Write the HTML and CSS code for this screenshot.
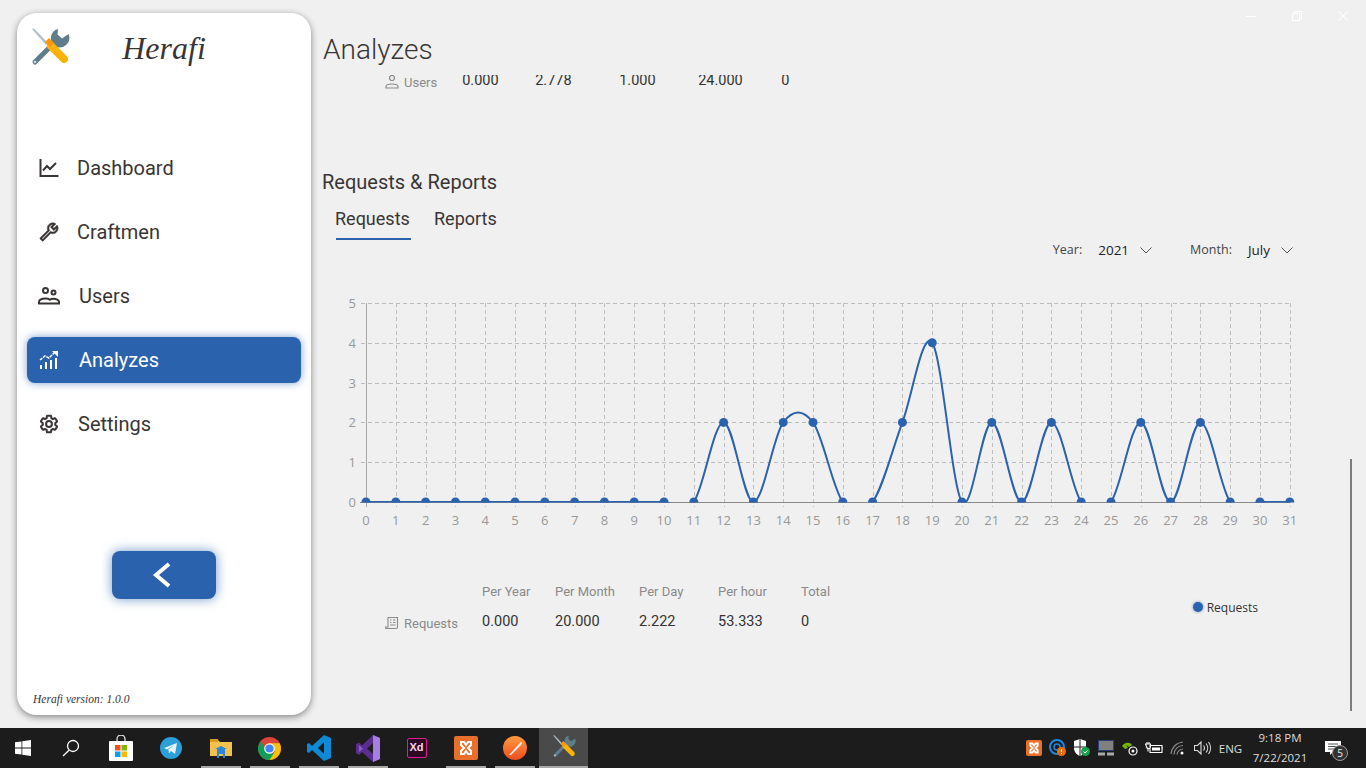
FILE: index.html
```html
<!DOCTYPE html>
<html lang="en">
<head>
    <meta charset="UTF-8">
    <title>Herafi</title>
    <link rel="stylesheet" href="styles.css">
</head>
<body>
    <svg class="defs" width="0" height="0">
        <symbol id="tools" viewBox="0 0 40 40">
            <path d="M2 1L4 0.500L18 15L16 17Z" fill="#b0bec5"/>
            <path d="M5 34L26 13" stroke="#607d8b" stroke-width="5" stroke-linecap="round"/>
            <path d="M28 1L27.500 6.500L32 10.500L38.500 6A9.500 9.500 0 0 1 25 18A9.500 9.500 0 0 1 28 1Z" fill="#607d8b"/>
            <path d="M21 18L34 31" stroke="#ffb300" stroke-width="8" stroke-linecap="round"/>
            <path d="M15 14L19 10L24 15L20 19Z" fill="#ff9800"/>
            <circle cx="5" cy="34" r="1.300" fill="#cfd8dc"/>
        </symbol>
    </svg>

    <div class="app">
        <aside class="sidebar">
            <div class="brand">
                <svg class="brand-logo" width="40" height="40"><use href="#tools"/></svg>
                <div class="brand-name">Herafi</div>
            </div>
            <nav class="nav">
                <div class="nav-item">
                    <svg class="nav-icon" width="20" height="20" viewBox="0 0 20 20" fill="none" stroke="currentColor" stroke-width="2">
                        <path d="M1.500 1v17h18M4 12.500l4-4.500 3 3 6-6"/>
                    </svg>
                    <span>Dashboard</span>
                </div>
                <div class="nav-item">
                    <svg class="nav-icon icon-flip" width="20" height="20" viewBox="0 0 24 24" fill="currentColor" stroke="currentColor" stroke-width=".6">
                        <path d="M22.61 18.99l-9.08-9.08c.93-2.34.45-5.1-1.44-7C9.79.61 6.21.4 3.66 2.26L7.5 6.11 6.08 7.52 2.25 3.69C.39 6.23.6 9.82 2.9 12.11c1.86 1.86 4.57 2.35 6.89 1.48l9.11 9.11c.39.39 1.02.39 1.41 0l2.3-2.3c.4-.38.4-1.01 0-1.41zm-3 1.6l-9.46-9.46c-.61.45-1.29.72-2 .82-1.36.2-2.79-.21-3.83-1.25C3.37 9.76 2.93 8.5 3 7.26l3.09 3.09 4.24-4.24-3.09-3.09c1.24-.07 2.49.37 3.44 1.31 1.08 1.08 1.49 2.57 1.24 3.96-.12.71-.42 1.37-.88 1.96l9.45 9.45-.88.88z"/>
                    </svg>
                    <span>Craftmen</span>
                </div>
                <div class="nav-item nav-item-wide">
                    <svg class="nav-icon icon-users" width="22" height="18" viewBox="0 0 22 18" fill="none" stroke="currentColor" stroke-width="2">
                        <circle cx="7.500" cy="3.500" r="2.500"/>
                        <circle cx="15.500" cy="5.500" r="2"/>
                        <path d="M1 16.500v-1.500c0-2.500 3.500-3.500 6.500-3.500 2 0 3.500.5 4.500 1.200 1-.6 2.300-.9 3.500-.9 2.500 0 5.500 1.200 5.500 3v1.700z"/>
                    </svg>
                    <span>Users</span>
                </div>
                <div class="nav-item nav-item-wide active">
                    <svg class="nav-icon" width="20" height="20" viewBox="0 0 20 20" fill="currentColor">
                        <rect x="1" y="15" width="2" height="4"/>
                        <rect x="6" y="12" width="2" height="7"/>
                        <rect x="11" y="10" width="2" height="9"/>
                        <rect x="16" y="8" width="2" height="11"/>
                        <path d="M1 10l5-4 4 2 6-6" fill="none" stroke="currentColor" stroke-width="1.500" stroke-dasharray="3 1"/>
                        <path d="M13 1h6v6z"/>
                    </svg>
                    <span>Analyzes</span>
                </div>
                <div class="nav-item nav-item-gear">
                    <svg class="nav-icon" width="20" height="20" viewBox="0 0 24 24" fill="none" stroke="currentColor" stroke-width="2.400">
                        <path d="M19.43 12.98c.04-.32.07-.64.07-.98s-.03-.66-.07-.98l2.11-1.65c.19-.15.24-.42.12-.64l-2-3.46c-.12-.22-.39-.3-.61-.22l-2.49 1c-.52-.4-1.08-.73-1.69-.98l-.38-2.65C14.46 2.18 14.25 2 14 2h-4c-.25 0-.46.18-.49.42l-.38 2.65c-.61.25-1.17.59-1.69.98l-2.49-1c-.23-.09-.49 0-.61.22l-2 3.46c-.13.22-.07.49.12.64l2.11 1.65c-.04.32-.07.65-.07.98s.03.66.07.98l-2.11 1.65c-.19.15-.24.42-.12.64l2 3.46c.12.22.39.3.61.22l2.49-1c.52.4 1.08.73 1.69.98l.38 2.65c.03.24.24.42.49.42h4c.25 0 .46-.18.49-.42l.38-2.65c.61-.25 1.17-.59 1.69-.98l2.49 1c.23.09.49 0 .61-.22l2-3.46c.12-.22.07-.49-.12-.64l-2.11-1.65z"/>
                        <circle cx="12" cy="12" r="3.500"/>
                    </svg>
                    <span>Settings</span>
                </div>
            </nav>
            <button class="collapse-btn">
                <svg width="20" height="26" viewBox="0 0 20 26" fill="none" stroke="#fff" stroke-width="4">
                    <path d="M17 2L4 13l13 11"/>
                </svg>
            </button>
            <div class="version">Herafi version: 1.0.0</div>
        </aside>

        <main class="main">
            <h1 class="page-title">Analyzes</h1>
            <div class="scroll">
                <div class="stat-grid stat-grid-users">
                    <div class="stat-label">
                        <svg width="14" height="14" viewBox="0 0 14 14" fill="none" stroke="#8a8a8a" stroke-width="1.200">
                            <circle cx="7" cy="3" r="2.500"/>
                            <path d="M1 13v-1.500c0-1.500 3-2.500 6-2.500s6 1 6 2.500V13z"/>
                        </svg>
                        Users
                    </div>
                    <div class="stat-value">0.000</div>
                    <div class="stat-value">2.778</div>
                    <div class="stat-value">1.000</div>
                    <div class="stat-value">24.000</div>
                    <div class="stat-value">0</div>
                </div>

                <h2 class="section-title">Requests &amp; Reports</h2>
                <div class="tabs">
                    <div class="tab active">Requests</div>
                    <div class="tab">Reports</div>
                </div>

                <div class="filters">
                    <div class="filter">
                        <span class="filter-label">Year:</span>
                        <span class="filter-value">2021</span>
                        <svg width="12" height="7" viewBox="0 0 12 7" fill="none" stroke="#555"><path d="M.5.5L6 6 11.500.5"/></svg>
                    </div>
                    <div class="filter">
                        <span class="filter-label">Month:</span>
                        <span class="filter-value">July</span>
                        <svg width="12" height="7" viewBox="0 0 12 7" fill="none" stroke="#555"><path d="M.5.5L6 6 11.500.5"/></svg>
                    </div>
                </div>

                <div id="chart" class="chart"></div>

                <div class="stats-row">
                    <div class="stat-grid">
                        <div></div>
                        <div class="stat-head">Per Year</div>
                        <div class="stat-head">Per Month</div>
                        <div class="stat-head">Per Day</div>
                        <div class="stat-head">Per hour</div>
                        <div class="stat-head">Total</div>
                        <div class="stat-label">
                            <svg width="14" height="14" viewBox="0 0 14 14" fill="none" stroke="#8a8a8a" stroke-width="1.100">
                                <path d="M3 11V1.500h9.500V11c0 1-.5 1.500-1.500 1.500H1.500C.8 12.500.5 12 .5 11z"/>
                                <path d="M5 4h1.500M8 4h2.500M5 6.500h1.500M8 6.500h2.500M5 9h5.500"/>
                            </svg>
                            Requests
                        </div>
                        <div class="stat-value">0.000</div>
                        <div class="stat-value">20.000</div>
                        <div class="stat-value">2.222</div>
                        <div class="stat-value">53.333</div>
                        <div class="stat-value">0</div>
                    </div>
                    <div class="legend">
                        <span class="legend-dot"></span>
                        Requests
                    </div>
                </div>
            </div>
            <div class="scrollbar"></div>
        </main>

        <div class="window-controls">
            <svg width="10" height="10" viewBox="0 0 10 10" stroke="#fff"><path d="M0 5.500h10"/></svg>
            <svg width="10" height="10" viewBox="0 0 10 10" fill="none" stroke="#fff"><path d="M.5 2.500h7v7h-7zM2.500 2.500v-2h7v7h-2"/></svg>
            <svg width="10" height="10" viewBox="0 0 10 10" stroke="#fff"><path d="M0 0l10 10M10 0L0 10"/></svg>
        </div>
    </div>

    <footer class="taskbar">
        <div class="task-item task-start">
            <svg width="16" height="16" viewBox="0 0 16 16" fill="#fff">
                <path d="M0 2.300l6.500-.9v6.200H0zM7.300 1.300L16 0v7.600H7.300zM0 8.400h6.500v6.200L0 13.700zM7.300 8.400H16V16l-8.700-1.300z"/>
            </svg>
        </div>
        <div class="task-item task-search">
            <svg width="18" height="18" viewBox="0 0 18 18" fill="none" stroke="#fff" stroke-width="1.300">
                <circle cx="11" cy="7" r="5.500"/>
                <path d="M7 11.200L1 17"/>
            </svg>
        </div>
        <div class="task-item task-search">
            <svg width="24" height="26" viewBox="0 0 24 26">
                <path d="M8 7V4a4 4 0 0 1 8 0v3" fill="none" stroke="#ddd" stroke-width="1.300"/>
                <rect y="6" width="24" height="20" rx="1" fill="#fff"/>
                <rect x="6" y="10" width="5.500" height="5.500" fill="#f25022"/>
                <rect x="12.500" y="10" width="5.500" height="5.500" fill="#7fba00"/>
                <rect x="6" y="16.500" width="5.500" height="5.500" fill="#00a4ef"/>
                <rect x="12.500" y="16.500" width="5.500" height="5.500" fill="#ffb900"/>
            </svg>
        </div>
        <div class="task-item task-search">
            <svg width="22" height="22" viewBox="0 0 22 22">
                <circle cx="11" cy="11" r="11" fill="#2a9fd8"/>
                <path d="M4 11l13-5-2 11-4-3-2 2.500-.7-4L15 7.500 7 12.500z" fill="#e8f4fa"/>
            </svg>
        </div>
        <div class="task-item running">
            <svg width="22" height="20" viewBox="0 0 22 20">
                <path d="M0 2h8l2 2h12v14H0z" fill="#f2c14e"/>
                <path d="M0 1h8v3H0z" fill="#d99a1e"/>
                <path d="M7 11h8v9h-2v-4H9v4H7z" fill="#2b88d8"/>
                <path d="M5 11l6-3 6 3z" fill="#2b88d8"/>
            </svg>
        </div>
        <div class="task-item running">
            <svg width="23" height="23" viewBox="0 0 24 24">
                <circle cx="12" cy="12" r="12" fill="#db4437"/>
                <path d="M12 24a12 12 0 0 1-10.400-6A12 12 0 0 1 3 4.500L7 12h5l5 8.500A12 12 0 0 1 12 24z" fill="#0f9d58"/>
                <path d="M12 6.500h10.600A12 12 0 0 1 12 24l5.500-9z" fill="#f4c20d"/>
                <circle cx="12" cy="12" r="5.500" fill="#fff"/>
                <circle cx="12" cy="12" r="4.300" fill="#4285f4"/>
            </svg>
        </div>
        <div class="task-item running">
            <svg width="24" height="26" viewBox="0 0 24 26">
                <path d="M17 0l7 3v20l-7 3L5 15l-3 3-2-1v-8l2-1 3 3zM17 7l-6 6 6 6z" fill="#0e8ad6"/>
            </svg>
        </div>
        <div class="task-item running">
            <svg width="24" height="27" viewBox="0 0 24 27">
                <path d="M17 0l7 3v21l-7 3-11-10-3 3-3-2V9l3-1.500 3 3z" fill="#5c2d91"/>
                <path d="M17 0l7 3v21l-7 3z" fill="#a77fe0"/>
                <path d="M3 10l4 3.500L3 17z" fill="#8a5bd1"/>
                <path d="M17 8l-6 5.500 6 5.500z" fill="#1e1e1e"/>
            </svg>
        </div>
        <div class="task-item">
            <div class="xd-icon">Xd</div>
        </div>
        <div class="task-item running">
            <div class="xampp-icon">
                <svg width="16" height="16" viewBox="0 0 16 16" fill="none" stroke="#fff" stroke-width="2">
                    <path d="M3 2h3l2 3 2-3h3v3l-3 3 3 3v3h-3l-2-3-2 3H3v-3l3-3-3-3z"/>
                </svg>
            </div>
        </div>
        <div class="task-item running">
            <svg width="24" height="24" viewBox="0 0 24 24">
                <defs>
                    <linearGradient id="paw" x1="0" y1="0" x2="0" y2="1">
                        <stop offset="0" stop-color="#ff9a3c"/>
                        <stop offset="1" stop-color="#f04d23"/>
                    </linearGradient>
                </defs>
                <circle cx="12" cy="12" r="12" fill="url(#paw)"/>
                <path d="M6 19L16 8l2-2 1 1-1 2L8 19z" fill="#fff" opacity=".9"/>
            </svg>
        </div>
        <div class="task-item running-active">
            <svg width="24" height="24"><use href="#tools"/></svg>
        </div>

        <div class="tray">
            <div class="tray-icon">
                <div class="xampp-icon xampp-small">
                    <svg width="12" height="12" viewBox="0 0 16 16" fill="none" stroke="#fff" stroke-width="2.400">
                        <path d="M3 2h3l2 3 2-3h3v3l-3 3 3 3v3h-3l-2-3-2 3H3v-3l3-3-3-3z"/>
                    </svg>
                </div>
            </div>
            <div class="tray-icon">
                <svg width="18" height="18" viewBox="0 0 18 18">
                    <circle cx="8" cy="8" r="7" fill="none" stroke="#1e88e5" stroke-width="2"/>
                    <circle cx="8" cy="8" r="3" fill="none" stroke="#1e88e5" stroke-width="1.500"/>
                    <circle cx="12.500" cy="12.500" r="4.500" fill="#ef6c00"/>
                    <path d="M12.500 10v3M12.500 14v1" stroke="#fff"/>
                </svg>
            </div>
            <div class="tray-icon">
                <svg width="18" height="18" viewBox="0 0 18 18">
                    <path d="M1 2l6-2 6 2v7c0 4-3 7-6 8-3-1-6-4-6-8z" fill="#fff"/>
                    <path d="M7 0v17M1 8h12" stroke="#1c1c1c"/>
                    <circle cx="12.500" cy="12.500" r="4.500" fill="#16a34a"/>
                    <path d="M10.500 12.500l1.500 1.500 2.500-2.500" fill="none" stroke="#fff"/>
                </svg>
            </div>
            <div class="tray-icon">
                <svg width="16" height="16" viewBox="0 0 16 16">
                    <rect x=".5" y=".5" width="15" height="10" fill="#808080" stroke="#2a3f7a"/>
                    <rect y="12.500" width="7" height="3" fill="#aaa"/>
                    <rect x="9" y="12.500" width="7" height="3" fill="#aaa"/>
                </svg>
            </div>
            <div class="tray-icon">
                <svg width="18" height="16" viewBox="0 0 18 16">
                    <path d="M1 6c3-4 8-4 10-1l-3 2-3-2 2 3-3 1z" fill="#76b900"/>
                    <circle cx="12" cy="11" r="4" fill="none" stroke="#fff" stroke-width="1.200"/>
                    <circle cx="12" cy="11" r="1.500" fill="#fff"/>
                </svg>
            </div>
            <div class="tray-icon">
                <svg width="18" height="12" viewBox="0 0 18 12" fill="none" stroke="#fff" stroke-width="1.100">
                    <path d="M5 3.500h12v7H5zM17 6h1M2 0v2M4 0v2M.5 2h5v2.500a2 2 0 0 1-4 0zM3 6.500v3"/>
                    <rect x="7" y="5.500" width="8" height="3" fill="#fff" stroke="none"/>
                </svg>
            </div>
            <div class="tray-icon">
                <svg width="16" height="14" viewBox="0 0 16 14" fill="none" stroke="#888" stroke-width="1.200">
                    <path d="M1 13A13 13 0 0 1 13 1M4 13.500A9 9 0 0 1 13 4.500M7 13.500A6 6 0 0 1 13 8"/>
                    <circle cx="12" cy="12" r="1.500" fill="#fff" stroke="none"/>
                </svg>
            </div>
            <div class="tray-icon">
                <svg width="17" height="14" viewBox="0 0 17 14" fill="none" stroke="#ddd" stroke-width="1.100">
                    <path d="M.5 4.500h3L7 1v12L3.500 9.500h-3zM9.500 4.500a4 4 0 0 1 0 5M12 2.500a7 7 0 0 1 0 9M14.500 1a10 10 0 0 1 0 12" />
                </svg>
            </div>
            <div class="tray-lang">ENG</div>
            <div class="tray-clock">
                <div>9:18 PM</div>
                <div>7/22/2021</div>
            </div>
            <div class="tray-notify">
                <svg width="16" height="15" viewBox="0 0 16 15">
                    <path d="M0 0h16v11H8l-3 3v-3H0z" fill="#fff"/>
                    <path d="M3 3h10M3 5.500h10M3 8h6" stroke="#555"/>
                </svg>
                <span class="notify-badge">5</span>
            </div>
        </div>
    </footer>

    <script src="chart.js"></script>
</body>
</html>
```

FILE: styles.css
```css
* {
    box-sizing: border-box;
}
html, body {
    margin: 0;
    padding: 0;
    height: 768px;
    overflow: hidden;
}
body {
    display: flex;
    flex-direction: column;
    background-color: #f0f0f0;
    font-family: Roboto, 'Noto Sans', sans-serif;
    color: #3a3535;
}
.defs {
    position: absolute;
}
.app {
    position: relative;
    display: flex;
    height: 728px;
}

/* sidebar */
.sidebar {
    display: flex;
    flex-direction: column;
    flex-shrink: 0;
    width: 294px;
    height: 702px;
    margin: 13px 0 13px 17px;
    background-color: #fff;
    border-radius: 20px;
    box-shadow: 0 2px 7px rgba(0,0,0,0.45);
}
.brand {
    display: grid;
    grid-template-columns: 1fr auto 1fr;
    align-items: center;
    height: 40px;
    margin-top: 15px;
    padding-left: 13px;
    padding-right: 13px;
}
.brand-name {
    font-family: 'Liberation Serif', serif;
    font-style: italic;
    font-size: 32px;
    line-height: 40px;
}
.nav {
    display: flex;
    flex-direction: column;
    gap: 18px;
    margin-top: 77px;
    padding: 0 10px;
}
.nav-item {
    display: flex;
    align-items: center;
    height: 46px;
    padding-left: 12px;
    border-radius: 8px;
    font-size: 20px;
}
.nav-item span {
    margin-left: 18px;
}
.nav-icon {
    flex-shrink: 0;
}
.icon-flip {
    transform: scaleX(-1);
}
.nav-item-wide span {
    margin-left: 20px;
}
.nav-item-gear span {
    margin-left: 19px;
}
.icon-users {
    margin-left: -1px;
}
.icon-users + span {
    margin-left: 19px;
}
.nav-item.active {
    background-color: #2b62ae;
    color: #fff;
    box-shadow: 0 0 8px rgba(43,98,174,0.6);
}
.collapse-btn {
    display: flex;
    align-items: center;
    justify-content: center;
    align-self: center;
    width: 104px;
    height: 48px;
    margin-top: 104px;
    padding: 0 4px 0 0;
    border: none;
    border-radius: 8px;
    background-color: #2b62ae;
    box-shadow: 0 0 12px rgba(43,98,174,0.65);
}
.version {
    margin-top: auto;
    padding: 0 0 8px 16px;
    font-family: 'Liberation Serif', serif;
    font-style: italic;
    font-size: 11.5px;
    line-height: 16px;
}

/* main */
.main {
    position: relative;
    display: flex;
    flex-direction: column;
    flex: 1;
    min-width: 0;
    height: 728px;
    margin-left: 12px;
}
.page-title {
    margin: 0;
    padding: 33px 0 9px;
    font-weight: 300;
    font-size: 28px;
    line-height: 33px;
}
.scroll {
    flex: 1;
    overflow: hidden;
}
.stat-grid {
    display: grid;
    grid-template-columns: auto 73px 84px 79px 83px auto;
    align-items: center;
    justify-content: start;
    margin-left: 62px;
    row-gap: 9px;
}
.stat-grid-users {
    margin-top: -6px;
}
.stat-grid-users .stat-label {
    padding-right: 25px;
}
.stat-label {
    display: flex;
    align-items: center;
    gap: 5px;
    padding-top: 2px;
    padding-right: 24px;
    font-size: 13px;
    color: #8a8a8a;
}
.stat-value {
    font-size: 14.5px;
    line-height: 24px;
    color: #333;
}
.stat-head {
    font-size: 13px;
    line-height: 18px;
    color: #8a8a8a;
}
.section-title {
    margin: 77px 0 0 -1px;
    font-weight: 400;
    font-size: 20px;
    line-height: 24px;
}
.tabs {
    display: flex;
    gap: 23px;
    margin: 13px 0 0 13px;
}
.tab {
    padding-bottom: 7px;
    border-bottom: 2px solid transparent;
    font-size: 18px;
    line-height: 24px;
}
.tab.active {
    width: 75px;
    text-indent: -1px;
    border-bottom-color: #2b62ae;
}
.filters {
    display: flex;
    justify-content: flex-end;
    gap: 38px;
    height: 20px;
    padding-right: 73px;
    font-family: 'Open Sans', sans-serif;
    font-size: 12.5px;
    line-height: 20px;
}
.filter {
    display: flex;
    align-items: center;
}
.filter-label {
    color: #444;
}
.filter-value {
    margin: 0 11px 0 16px;
    font-size: 13.5px;
    color: #222;
}
.chart {
    margin: 30px 0 0 17px;
    height: 245px;
}
.chart svg {
    display: block;
}
.stats-row {
    display: flex;
    align-items: center;
    justify-content: space-between;
    margin-top: 48px;
    padding-right: 108px;
}
.legend {
    display: flex;
    align-items: center;
    gap: 4px;
    padding-bottom: 3px;
    font-family: 'Open Sans', sans-serif;
    font-size: 12px;
    color: #333;
}
.legend-dot {
    width: 10px;
    height: 10px;
    border-radius: 50%;
    background-color: #2b62ae;
    box-shadow: 0 0 3px rgba(43,98,174,0.7);
}
.scrollbar {
    position: absolute;
    top: 459px;
    right: 14px;
    width: 2px;
    height: 252px;
    background-color: #7d7d7d;
}
.window-controls {
    position: absolute;
    top: 11px;
    right: 18px;
    display: flex;
    gap: 36px;
}

/* taskbar */
.taskbar {
    display: flex;
    align-items: stretch;
    height: 40px;
    background-color: #1c1c1c;
}
.task-item {
    position: relative;
    display: flex;
    align-items: center;
    justify-content: center;
    width: 49px;
}
.task-start {
    width: 46px;
}
.task-search {
    width: 50px;
}
.task-item.running::after {
    content: "";
    position: absolute;
    left: 5px;
    right: 4px;
    bottom: 0;
    height: 2px;
    background-color: #a8a8a8;
}
.task-item.running-active {
    background-color: #4a4a4a;
    border-bottom: 2px solid #a8a8a8;
}
.xd-icon {
    width: 20px;
    height: 20px;
    border: 1.5px solid #e01b9a;
    border-radius: 2px;
    background-color: #2d0a24;
    color: #f7d7ec;
    font-family: 'Liberation Sans', sans-serif;
    font-size: 11px;
    font-weight: 700;
    line-height: 17px;
    text-align: center;
}
.xampp-icon {
    display: flex;
    align-items: center;
    justify-content: center;
    width: 24px;
    height: 24px;
    border-radius: 2px;
    background-color: #e8702a;
}
.xampp-small {
    width: 16px;
    height: 16px;
}
.tray {
    display: flex;
    align-items: center;
    margin-left: auto;
    padding-right: 10px;
    font-family: 'Open Sans', sans-serif;
    color: #ddd;
}
.tray-icon {
    display: flex;
    align-items: center;
    justify-content: center;
    width: 24px;
}
.tray-lang {
    width: 36px;
    padding-right: 3px;
    font-size: 11.5px;
    text-align: center;
}
.tray-clock {
    width: 60px;
    font-size: 11.5px;
    line-height: 20px;
    text-align: center;
}
.tray-notify {
    position: relative;
    display: flex;
    align-items: center;
    justify-content: center;
    width: 46px;
    height: 40px;
}
.notify-badge {
    position: absolute;
    top: 17px;
    right: 8px;
    width: 16px;
    height: 16px;
    border: 1px solid #999;
    border-radius: 50%;
    background-color: #333;
    font-size: 10px;
    line-height: 14px;
    text-align: center;
    color: #eee;
}
```

FILE: chart.js
```js
// Requests per day of the month
const days = { 12: 2, 14: 2, 15: 2, 18: 2, 19: 4, 21: 2, 23: 2, 26: 2, 28: 2 };
const values = [];
for (let i = 0; i <= 31; i++) {
    values.push(days[i] || 0);
}

const X = i => 26 + i * 29.8;
const Y = v => 212 - v * 39.8;
const crisp = n => Math.round(n) + 0.5;

let out = '<svg width="970" height="245" viewBox="0 0 970 245">';
out += '<defs><clipPath id="plot"><rect x="18" y="0" width="960" height="212.5"/></clipPath></defs>';

// grid
for (let v = 1; v <= 5; v++) {
    const y = crisp(Y(v));
    out += `<path d="M21 ${y}H950" fill="none" stroke="#bdbdbd" stroke-dasharray="4 3"/>`;
}
for (let i = 1; i <= 31; i++) {
    const x = crisp(X(i));
    out += `<path d="M${x} 13V217" fill="none" stroke="#bdbdbd" stroke-dasharray="4 3"/>`;
}
out += '<path d="M26.5 13V217" stroke="#a8a8a8" fill="none"/>';
out += '<path d="M20 212.5H950" stroke="#8a8a8a" fill="none"/>';

// labels
const labelStyle = 'font-family="Open Sans, sans-serif" font-size="13" fill="#989898"';
for (let v = 0; v <= 5; v++) {
    out += `<text x="16" y="${Y(v) + 5}" text-anchor="end" ${labelStyle}>${v}</text>`;
}
for (let i = 0; i <= 31; i++) {
    out += `<text x="${X(i)}" y="235" text-anchor="middle" ${labelStyle}>${i}</text>`;
}

// curve, catmull-rom turned into beziers
let d = `M${X(0)} ${Y(values[0])}`;
for (let i = 0; i < 31; i++) {
    const prev = values[Math.max(i - 1, 0)];
    const next = values[Math.min(i + 2, 31)];
    const m0 = (values[i + 1] - prev) / 2;
    const m1 = (next - values[i]) / 2;
    const c1 = values[i] + m0 / 3;
    const c2 = values[i + 1] - m1 / 3;
    d += `C${X(i + 1 / 3)} ${Y(c1)} ${X(i + 2 / 3)} ${Y(c2)} ${X(i + 1)} ${Y(values[i + 1])}`;
}
out += '<g clip-path="url(#plot)">';
out += `<path d="${d}" fill="none" stroke="#2b62ae" stroke-width="2"/>`;
values.forEach((v, i) => {
    out += `<circle cx="${X(i)}" cy="${Y(v)}" r="4.500" fill="#2b62ae"/>`;
});
out += '</g></svg>';

document.getElementById('chart').innerHTML = out;
```
